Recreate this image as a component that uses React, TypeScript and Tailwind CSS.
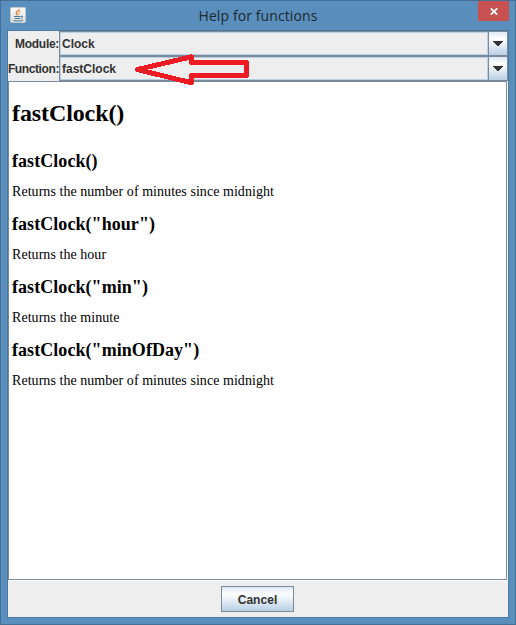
import type { ReactNode } from 'react';

function JavaIcon() {
  return (
    <svg width="16" height="16" viewBox="0 0 16 16" className="block">
      <defs>
        <linearGradient id="tile" x1="0" y1="0" x2="0" y2="1">
          <stop offset="0" stopColor="#fbfbfb" />
          <stop offset="1" stopColor="#d9dde0" />
        </linearGradient>
      </defs>
      <rect x="0.5" y="0.5" width="15" height="15" rx="1" fill="url(#tile)" stroke="#c3c8cc" />
      <path d="M9.3 1.8C9.6 3.6 6 4.3 6.2 6C6.3 7 7.2 7.3 7.3 8.4" fill="none" stroke="#e8772e" strokeWidth="1.3" />
      <path d="M10.7 4.2C8.9 4.8 8.2 5.6 8.8 6.5C9.1 7.1 8.8 7.7 8.2 8.2" fill="none" stroke="#e8914e" strokeWidth="1" />
      <path d="M4 9.5H10.8M4.8 11.5H10" stroke="#4a7896" strokeWidth="1.1" fill="none" />
      <path d="M11 9.2C13.3 8.6 13.1 10.8 10.8 11.4M3 13.2C4 14.3 11.5 14.2 13 13" fill="none" stroke="#4a7896" strokeWidth="1" />
    </svg>
  );
}

function Combo({ label, value }: { label: ReactNode; value: string }) {
  return (
    <div className="flex h-[25px]">
      <div className="flex w-[51px] justify-end whitespace-nowrap leading-[26px]">{label}</div>
      <div className="flex flex-1 border border-[#7a8a99]">
        <div className="flex-1 border border-[#b8cfe5] pl-[1px] leading-[22px]">{value}</div>
        <div className="flex w-[19px] items-center justify-center border-l border-[#7a8a99] bg-linear-to-b from-[#dde8f3] via-white via-30% to-[#b8cfe5]">
          <svg width="10" height="5" viewBox="0 0 10 5" shapeRendering="crispEdges">
            <path d="M0 0H10V1H9V2H8V3H7V4H6V5H4V4H3V3H2V2H1V1H0Z" fill="#333" />
          </svg>
        </div>
      </div>
    </div>
  );
}

function Entry({ title, children }: { title: string; children: ReactNode }) {
  return (
    <section className="h-[63px]">
      <h2 className="h-[33px] text-[18px] font-bold leading-[23px] tracking-[0.06px]">{title}</h2>
      <p className="text-[14px] font-normal leading-[18px] tracking-[0.05px]">{children}</p>
    </section>
  );
}

export default function App() {
  return (
    <div className="relative flex h-[625px] w-[516px] flex-col border border-[#446f96] bg-[#5a8fbd] px-[6px] pb-[6px] font-['Liberation_Sans',Arial,sans-serif] text-[12px] font-bold text-[#333]">
      <header className="grid h-[29px] grid-cols-[68px_1fr_68px]">
        <div className="pl-[3px] pt-[6px]">
          <JavaIcon />
        </div>
        <h1 className="whitespace-nowrap pt-[4px] text-center font-['Open_Sans','Noto_Sans',sans-serif] text-[14px] font-normal leading-[21px] tracking-[0.1px] text-[#1c2730]">
          Help for functions
        </h1>
        <button className="ml-auto flex h-5 w-[31px] items-center justify-center bg-[#c75050]" aria-label="Close">
          <svg width="8" height="7" viewBox="0 0 8 7">
            <path d="M.8 .3L7.2 6.7M7.2 .3L.8 6.7" stroke="white" strokeWidth="1.7" />
          </svg>
        </button>
      </header>
      <main className="flex flex-1 flex-col border border-[#4b789f] bg-[#eee]">
        <Combo label={<span className="tracking-[-0.3px]">Module:</span>} value="Clock" />
        <Combo label={<span className="tracking-[-0.4px]">Function:</span>} value="fastClock" />
        <div className="h-[500px] border-b border-r border-white">
          <article className="h-full border border-[#7a8a99] bg-white pl-[3px] font-['Liberation_Serif','Times_New_Roman',serif] text-black">
            <h1 className="h-[68px] pt-[17px] text-[24px] font-bold leading-[28px] tracking-[-0.1px]">fastClock()</h1>
            <Entry title="fastClock()">Returns the number of minutes since midnight</Entry>
            <Entry title={'fastClock("hour")'}>Returns the hour</Entry>
            <Entry title={'fastClock("min")'}>Returns the minute</Entry>
            <Entry title={'fastClock("minOfDay")'}>Returns the number of minutes since midnight</Entry>
          </article>
        </div>
        <footer className="flex justify-center pr-[2px] pt-[5px]">
          <button className="h-[26px] w-[73px] border border-[#7a8a99] bg-linear-to-b from-[#dde8f3] via-white via-30% to-[#b8cfe5] pl-px pt-px tracking-[0.05px]">
            Cancel
          </button>
        </footer>
      </main>
      <svg className="absolute left-[131px] top-[49px]" width="122" height="40" viewBox="132 50 122 40">
        <path d="M137.5 69.5L191.5 56.8V62.5H246.5V75.5H191.5V82.8Z" fill="none" stroke="#ed1c24" strokeWidth="5" strokeLinejoin="round" shapeRendering="crispEdges" />
      </svg>
    </div>
  );
}
